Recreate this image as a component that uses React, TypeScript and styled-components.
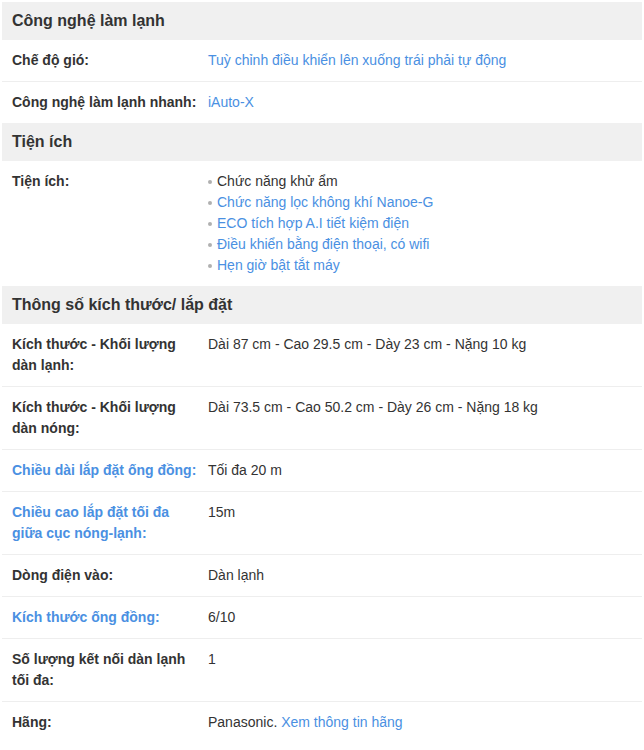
import React from "react";
import styled, { createGlobalStyle } from "styled-components";

const GlobalStyle = createGlobalStyle`
  html, body { margin: 0; padding: 0; background: #fff; }
  body { margin: 2px; font-family: "Liberation Sans", Arial, sans-serif; color: #333; }
`;

const Spec = styled.div`
  width: 640px;
  font-family: "Liberation Sans", Arial, sans-serif;
  font-size: 14px;
  color: #333;
`;

const SectionTitle = styled.h3`
  margin: 0;
  background: #f0f0f0;
  padding: 8px 10px;
  font-size: 16px;
  line-height: 22px;
  font-weight: bold;
  color: #333;
`;

const Section = styled.div``;

const Row = styled.div`
  display: grid;
  grid-template-columns: 186px 1fr;
  column-gap: 10px;
  padding: 10px 10px;
  line-height: 21px;
  border-bottom: 1px solid #eee;
  &:last-child { border-bottom: none; }
`;

const Label = styled.div<{ $link?: boolean }>`
  font-weight: bold;
  color: ${(p) => (p.$link ? "#4a90e2" : "#333")};
`;

const Value = styled.div`
  color: #333;
`;

const Link = styled.span`
  color: #4a90e2;
`;

const List = styled.ul`
  list-style: none;
  margin: 0;
  padding: 0;
`;

const Item = styled.li<{ $link?: boolean }>`
  display: flex;
  align-items: center;
  color: ${(p) => (p.$link ? "#4a90e2" : "#333")};
  &::before {
    content: "";
    width: 4px;
    height: 4px;
    border-radius: 50%;
    background: #b0b0b0;
    margin-right: 5px;
    margin-top: 1px;
    flex: none;
  }
`;

type R = { label: string; labelLink?: boolean; value: React.ReactNode };

const section1: R[] = [
  { label: "Chế độ gió:", value: <Link>Tuỳ chỉnh điều khiển lên xuống trái phải tự động</Link> },
  { label: "Công nghệ làm lạnh nhanh:", value: <Link>iAuto-X</Link> },
];

const section3: R[] = [
  { label: "Kích thước - Khối lượng dàn lạnh:", value: "Dài 87 cm - Cao 29.5 cm - Dày 23 cm - Nặng 10 kg" },
  { label: "Kích thước - Khối lượng dàn nóng:", value: "Dài 73.5 cm - Cao 50.2 cm - Dày 26 cm - Nặng 18 kg" },
  { label: "Chiều dài lắp đặt ống đồng:", labelLink: true, value: "Tối đa 20 m" },
  { label: "Chiều cao lắp đặt tối đa giữa cục nóng-lạnh:", labelLink: true, value: "15m" },
  { label: "Dòng điện vào:", value: "Dàn lạnh" },
  { label: "Kích thước ống đồng:", labelLink: true, value: "6/10" },
  { label: "Số lượng kết nối dàn lạnh tối đa:", value: "1" },
  {
    label: "Hãng:",
    value: (
      <>
        Panasonic. <Link>Xem thông tin hãng</Link>
      </>
    ),
  },
];

const utilities = [
  { text: "Chức năng khử ẩm", link: false },
  { text: "Chức năng lọc không khí Nanoe-G", link: true },
  { text: "ECO tích hợp A.I tiết kiệm điện", link: true },
  { text: "Điều khiển bằng điện thoại, có wifi", link: true },
  { text: "Hẹn giờ bật tắt máy", link: true },
];

const Rows = ({ rows }: { rows: R[] }) => (
  <Section>
    {rows.map((r) => (
      <Row key={r.label}>
        <Label $link={r.labelLink}>{r.label}</Label>
        <Value>{r.value}</Value>
      </Row>
    ))}
  </Section>
);

export default function App() {
  return (
    <>
      <GlobalStyle />
      <Spec>
        <SectionTitle>Công nghệ làm lạnh</SectionTitle>
        <Rows rows={section1} />
        <SectionTitle>Tiện ích</SectionTitle>
        <Section>
          <Row>
            <Label>Tiện ích:</Label>
            <Value>
              <List>
                {utilities.map((u) => (
                  <Item key={u.text} $link={u.link}>
                    {u.text}
                  </Item>
                ))}
              </List>
            </Value>
          </Row>
        </Section>
        <SectionTitle>Thông số kích thước/ lắp đặt</SectionTitle>
        <Rows rows={section3} />
      </Spec>
    </>
  );
}
